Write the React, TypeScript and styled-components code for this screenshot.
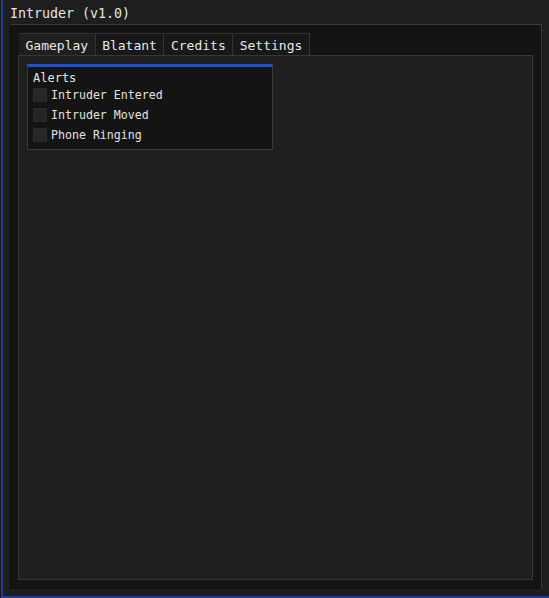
import React from "react";
import styled, { createGlobalStyle } from "styled-components";

const Global = createGlobalStyle`
  html, body { margin: 0; padding: 0; background: #161616; }
  body { font-family: "DejaVu Sans Mono", "Liberation Mono", monospace; color: #e4e4e4; }
  * { box-sizing: border-box; }
`;

const Page = styled.div`
  width: 549px;
  height: 598px;
  padding-left: 1px;
  background: #161616;
  overflow: hidden;
`;

const Window = styled.div`
  width: 548px;
  height: 598px;
  background: #1e1e1e;
  border-left: 2px solid #1d3c94;
  border-bottom: 2px solid #1d3c94;
  display: flex;
  flex-direction: column;
  padding: 0 7px 7px 7px;
`;

const Title = styled.div`
  height: 24px;
  line-height: 27px;
  font-size: 13.3px;
  color: #e6e6e6;
  white-space: nowrap;
`;

const Child = styled.div`
  width: 532px;
  flex: 0 0 565px;
  background: #141414;
  border: 1px solid #2e2e2e;
  border-left-color: #0b0d0b;
  border-top-color: #3a3a3a;
  border-right-color: #3a3a3a;
  border-bottom-color: #0e0e0e;
  padding: 8px 8px 8px 7px;
  display: flex;
  flex-direction: column;
`;

const TabBar = styled.div`
  display: flex;
  height: 22px;
  padding-left: 1px;
`;

const Tab = styled.div<{ $active?: boolean }>`
  height: 22px;
  padding: 0 6.5px;
  font-size: 13px;
  line-height: 23px;
  color: #e8e8e8;
  background: ${(p) => (p.$active ? "#1f1f1f" : "#181818")};
  border-top: 1px solid #333;
  border-right: 1px solid #333;
  white-space: nowrap;
`;

const Panel = styled.div`
  flex: 1;
  background: #1f1f1f;
  border: 1px solid #363636;
  padding: 8px 8px;
`;

const Group = styled.div`
  width: 246px;
  background: #141414;
  border: 1px solid #3a3a3a;
  border-top: 3px solid #2750b8;
  padding: 3px 5px 4px 5px;
  display: flex;
  flex-direction: column;
`;

const GroupTitle = styled.div`
  font-size: 12px;
  height: 15px;
  line-height: 16px;
  color: #e4e4e4;
`;

const Row = styled.div`
  display: flex;
  align-items: center;
  height: 20px;
  gap: 4px;
`;

const Box = styled.div`
  width: 14px;
  height: 14px;
  background: #262626;
  border: 1px solid #2c2c2c;
`;

const Label = styled.span`
  font-size: 11.6px;
  color: #e2e2e2;
  white-space: nowrap;
`;

const items = ["Intruder Entered", "Intruder Moved", "Phone Ringing"];
const tabs = ["Gameplay", "Blatant", "Credits", "Settings"];

export default function App() {
  return (
    <>
      <Global />
      <Page>
        <Window>
          <Title>Intruder (v1.0)</Title>
          <Child>
            <TabBar>
              {tabs.map((t, i) => (
                <Tab key={t} $active={i === 0}>
                  {t}
                </Tab>
              ))}
            </TabBar>
            <Panel>
              <Group>
                <GroupTitle>Alerts</GroupTitle>
                {items.map((it) => (
                  <Row key={it}>
                    <Box />
                    <Label>{it}</Label>
                  </Row>
                ))}
              </Group>
            </Panel>
          </Child>
        </Window>
      </Page>
    </>
  );
}
